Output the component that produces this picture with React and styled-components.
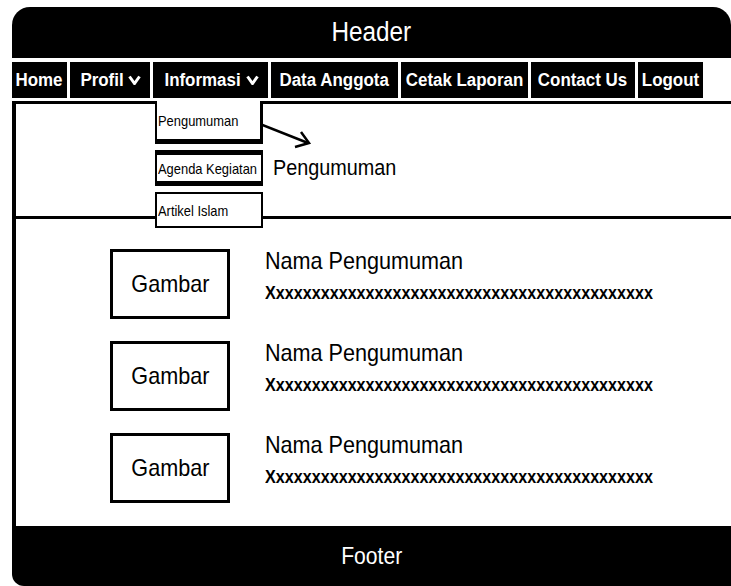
import React from 'react';
import styled, { createGlobalStyle } from 'styled-components';

const GlobalStyle = createGlobalStyle`
  html, body {
    margin: 0;
    padding: 0;
    background: #ffffff;
  }
  body {
    font-family: "Liberation Sans", Arial, sans-serif;
    color: #000;
  }
`;

const navItems = [
  { label: 'Home', width: 55 },
  { label: 'Profil', width: 80, drop: true },
  { label: 'Informasi', width: 115, drop: true },
  { label: 'Data Anggota', width: 127 },
  { label: 'Cetak Laporan', width: 127 },
  { label: 'Contact Us', width: 104 },
  { label: 'Logout', width: 65 },
];

const subMenu = ['Pengumuman', 'Agenda Kegiatan', 'Artikel Islam'];

const posts = [1, 2, 3];

function Chevron() {
  return (
    <svg width="13" height="10" viewBox="0 0 13 10">
      <path d="M1.5 1.5 L6.5 8.5 L11.5 1.5" fill="none" stroke="#fff" strokeWidth="3" />
    </svg>
  );
}

function App() {
  return (
    <>
      <GlobalStyle />
      <Page>
        <Header>
          <Narrow>Header</Narrow>
        </Header>
        <Nav>
          {navItems.map((item) => (
            <NavItem key={item.label} $w={item.width}>
              <Narrow $s={0.94}>{item.label}</Narrow>
              {item.drop && <Chevron />}
            </NavItem>
          ))}
        </Nav>
        <Content>
          <TopSection>
            <SectionTitle>Pengumuman</SectionTitle>
            <SubMenu>
              {subMenu.map((label, i) => (
                <SubItem key={label} $variant={i}>
                  <Narrow $s={0.86} $origin="left">{label}</Narrow>
                </SubItem>
              ))}
            </SubMenu>
            <Arrow width="70" height="40" viewBox="0 0 70 40">
              <path d="M2 3 L60 26" stroke="#000" strokeWidth="2.5" fill="none" />
              <path d="M53 15 L61 26 L47 30" stroke="#000" strokeWidth="2.5" fill="none" />
            </Arrow>
          </TopSection>
          <List>
            {posts.map((n) => (
              <Post key={n}>
                <ImageBox>
                  <Narrow>Gambar</Narrow>
                </ImageBox>
                <PostText>
                  <PostName>Nama Pengumuman</PostName>
                  <PostBody>Xxxxxxxxxxxxxxxxxxxxxxxxxxxxxxxxxxxxxxxxxxx</PostBody>
                </PostText>
              </Post>
            ))}
          </List>
        </Content>
        <Footer>
          <Narrow $s={0.88}>Footer</Narrow>
        </Footer>
      </Page>
    </>
  );
}

const Narrow = styled.span`
  display: inline-block;
  white-space: nowrap;
  transform: scaleX(${(p) => p.$s || 0.9});
  transform-origin: ${(p) => p.$origin || 'center'};
`;

const Page = styled.div`
  width: 719px;
  height: 579px;
  padding: 7px 0 0 12px;
  display: flex;
  flex-direction: column;
  overflow: hidden;
`;

const Header = styled.div`
  height: 51px;
  background: #000;
  color: #fff;
  border-radius: 18px 18px 0 0;
  font-size: 27px;
  display: flex;
  align-items: center;
  justify-content: center;
`;

const Nav = styled.div`
  display: flex;
  gap: 3px;
  margin-top: 4px;
  height: 36px;
`;

const NavItem = styled.div`
  width: ${(p) => p.$w}px;
  background: #000;
  color: #fff;
  font-weight: 700;
  font-size: 18px;
  display: flex;
  align-items: center;
  justify-content: center;
  gap: 3px;
  white-space: nowrap;
  overflow: hidden;
`;

const Content = styled.div`
  flex: 1;
  margin-top: 3px;
  border-top: 3px solid #000;
  border-left: 4px solid #000;
  display: flex;
  flex-direction: column;
`;

const TopSection = styled.div`
  position: relative;
  height: 115px;
  border-bottom: 3px solid #000;
  display: flex;
  align-items: center;
  padding-left: 257px;
  padding-top: 16px;
  box-sizing: border-box;
`;

const SectionTitle = styled.div`
  font-size: 22px;
  transform: scaleX(0.9);
  transform-origin: left;
`;

const SubMenu = styled.div`
  position: absolute;
  left: 139px;
  top: -3px;
  display: flex;
  flex-direction: column;
  gap: 6px;
  z-index: 2;
`;

const SubItem = styled.div`
  width: 108px;
  height: ${(p) => (p.$variant === 0 ? 43 : 36)}px;
  box-sizing: border-box;
  background: #fff;
  border-left: 2px solid #000;
  border-right: ${(p) => (p.$variant === 0 ? 3 : 2)}px solid #000;
  border-top: ${(p) => (p.$variant === 1 ? 5 : p.$variant === 2 ? 2 : 0)}px solid #000;
  border-bottom: ${(p) => (p.$variant === 2 ? 2 : 5)}px solid #000;
  font-size: 15px;
  display: flex;
  align-items: center;
  padding-left: 1px;
  overflow: hidden;
`;

const Arrow = styled.svg`
  position: absolute;
  left: 232px;
  top: 13px;
`;

const List = styled.div`
  flex: 1;
  display: flex;
  flex-direction: column;
  gap: 22px;
  padding: 30px 0 0 94px;
`;

const Post = styled.div`
  display: flex;
  gap: 35px;
`;

const ImageBox = styled.div`
  width: 120px;
  height: 70px;
  box-sizing: border-box;
  border: 3px solid #000;
  display: flex;
  align-items: center;
  justify-content: center;
  font-size: 24px;
`;

const PostText = styled.div`
  display: flex;
  flex-direction: column;
  gap: 7px;
`;

const PostName = styled.div`
  font-size: 24px;
  margin-top: -2px;
  white-space: nowrap;
  transform: scaleX(0.9);
  transform-origin: left;
`;

const PostBody = styled.div`
  font-size: 19px;
  font-weight: 700;
  white-space: nowrap;
  transform: scaleX(0.85);
  transform-origin: left;
`;

const Footer = styled.div`
  height: 60px;
  background: #000;
  color: #fff;
  border-radius: 0 0 0 12px;
  font-size: 24px;
  display: flex;
  align-items: center;
  justify-content: center;
`;

export default App;
